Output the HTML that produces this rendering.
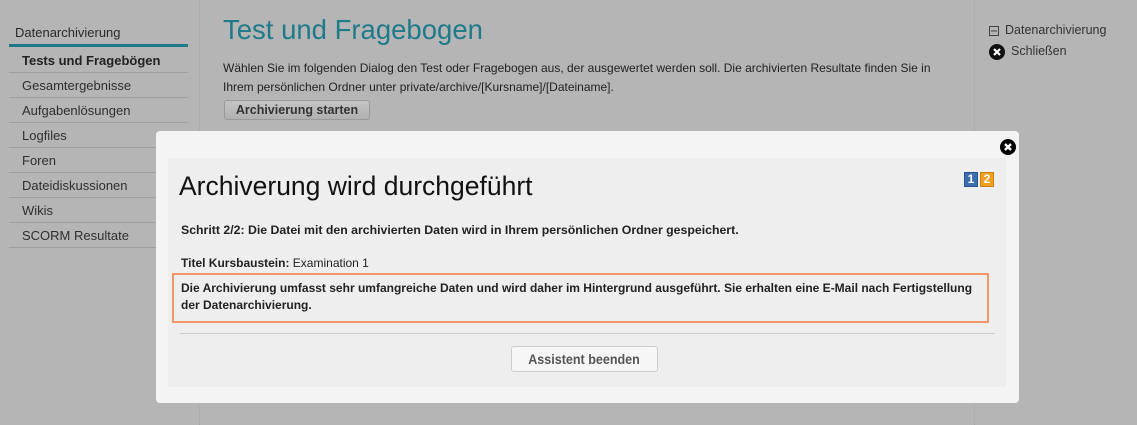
<!DOCTYPE html>
<html><head><meta charset="utf-8"><style>
*{box-sizing:border-box;margin:0;padding:0}
body{width:1137px;height:425px;overflow:hidden;background:#b5b5b5;font-family:"Liberation Sans",sans-serif;position:relative;color:#111}
.abs{position:absolute}
.nav{left:9px;width:179px;top:0}
.nav .h{position:absolute;top:25px;left:6px;font-size:13px;color:#2a2a2a}
.nav .bar{position:absolute;top:44px;left:0;width:179px;height:3px;background:#1f7a8a}
.nav .it{position:absolute;left:0;width:179px;height:25px;border-bottom:1px solid #a0a0a0;font-size:13px;color:#2f2f2f;padding:5px 0 0 13px}
.content{left:199px;top:0;width:776px;height:425px;background:#b5b5b5;border-left:1px dotted #a5a5a5;border-right:1px dotted #a5a5a5}
.btn{border:1px solid #999;border-radius:3px;background:linear-gradient(#c4c4c4,#b0b0b0);font-weight:bold;font-size:12.5px;color:#333}
</style></head><body>
<div class="abs nav">
<div class="h">Datenarchivierung</div>
<div class="bar"></div>
<div class="it" style="top:48px;font-weight:bold;color:#222">Tests und Fragebögen</div>
<div class="it" style="top:73px">Gesamtergebnisse</div>
<div class="it" style="top:98px">Aufgabenlösungen</div>
<div class="it" style="top:123px">Logfiles</div>
<div class="it" style="top:148px">Foren</div>
<div class="it" style="top:173px">Dateidiskussionen</div>
<div class="it" style="top:198px">Wikis</div>
<div class="it" style="top:223px">SCORM Resultate</div>
</div>
<div class="abs content"></div>
<div class="abs" style="left:223px;top:14px;font-size:27.5px;color:#1f7a8a">Test und Fragebogen</div>
<div class="abs" style="left:223px;top:59px;font-size:12px;line-height:19px;color:#222;white-space:nowrap">Wählen Sie im folgenden Dialog den Test oder Fragebogen aus, der ausgewertet werden soll. Die archivierten Resultate finden Sie in<br>Ihrem persönlichen Ordner unter private/archive/[Kursname]/[Dateiname].</div>
<div class="abs btn" style="left:224px;top:100px;width:146px;height:20px;padding-top:2px;text-align:center">Archivierung starten</div>
<svg class="abs" style="left:989px;top:26px" width="10" height="10"><rect x="0.5" y="0.5" width="9" height="9" fill="none" stroke="#444"/><line x1="2" y1="5" x2="8" y2="5" stroke="#444"/></svg>
<div class="abs" style="left:1005px;top:23px;font-size:12.5px;color:#333">Datenarchivierung</div>
<svg class="abs" style="left:989px;top:44px" width="16" height="16"><circle cx="8" cy="8" r="8" fill="#111"/><path d="M5 5L11 11M11 5L5 11" stroke="#fff" stroke-width="2.2"/></svg>
<div class="abs" style="left:1011px;top:44px;font-size:12.5px;color:#333">Schließen</div>

<div class="abs" style="left:156px;top:131px;width:863px;height:272px;background:#f4f4f4;border-radius:4px"></div>
<svg class="abs" style="left:1000px;top:139px" width="16" height="16"><circle cx="8" cy="8" r="8" fill="#000"/><path d="M5 5L11 11M11 5L5 11" stroke="#fff" stroke-width="2.4"/></svg>
<div class="abs" style="left:168px;top:158px;width:838px;height:229px;background:#eeeeee"></div>
<div class="abs" style="left:964px;top:172px;width:14px;height:15px;background:#3b6fb0;border:1px solid #2a5590;color:#fff;font-weight:bold;font-size:12px;text-align:center;line-height:13px">1</div>
<div class="abs" style="left:980px;top:172px;width:14px;height:15px;background:#f0a020;border:1px solid #d08010;color:#fff;font-weight:bold;font-size:12px;text-align:center;line-height:13px">2</div>
<div class="abs" style="left:179px;top:171px;font-size:26.5px;color:#111">Archiverung wird durchgeführt</div>
<div class="abs" style="left:181px;top:223px;font-size:12.3px;font-weight:bold;color:#222">Schritt 2/2: Die Datei mit den archivierten Daten wird in Ihrem persönlichen Ordner gespeichert.</div>
<div class="abs" style="left:181px;top:256px;font-size:12px;color:#222"><b>Titel Kursbaustein:</b> Examination 1</div>
<div class="abs" style="left:172px;top:273px;width:817px;height:50px;border:2px solid #f4956a"></div>
<div class="abs" style="left:181px;top:280px;font-size:12px;font-weight:bold;line-height:17px;color:#222">Die Archivierung umfasst sehr umfangreiche Daten und wird daher im Hintergrund ausgeführt. Sie erhalten eine E-Mail nach Fertigstellung<br>der Datenarchivierung.</div>
<div class="abs" style="left:180px;top:333px;width:815px;height:1px;background:#ccc"></div>
<div class="abs" style="left:511px;top:346px;width:147px;height:26px;border:1px solid #ccc;border-radius:3px;background:#f6f6f6;font-weight:bold;font-size:13.5px;color:#555;text-align:center;padding-top:5px"><span style="display:inline-block;transform:scaleX(0.93)">Assistent beenden</span></div>
</body></html>
